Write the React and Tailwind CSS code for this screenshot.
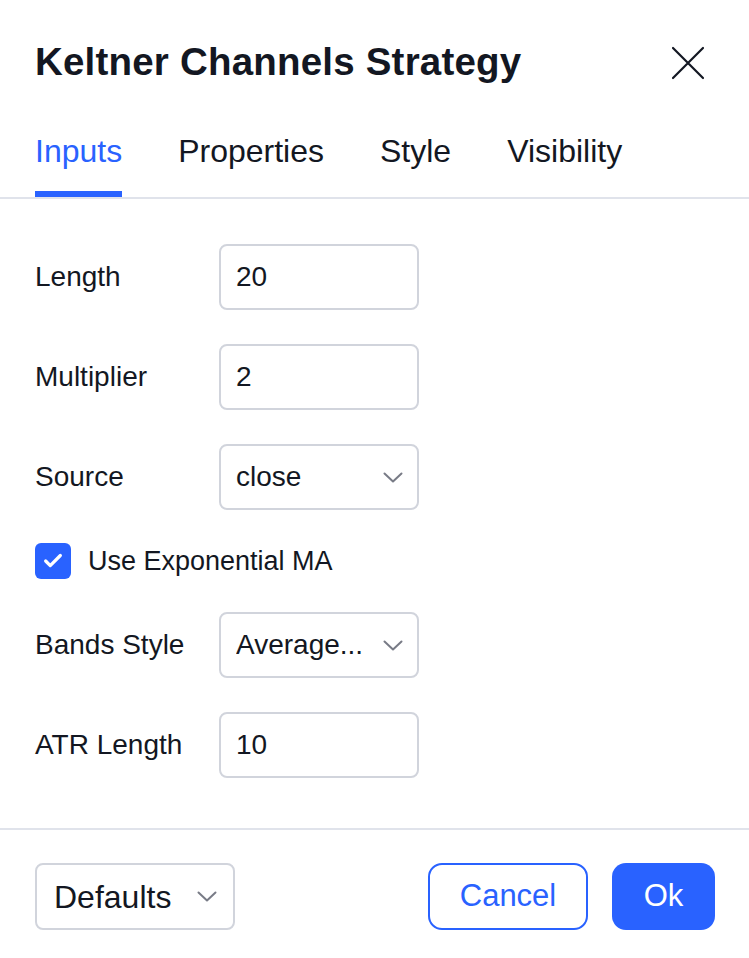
import { Check } from "lucide-react";

const Chevron = () => (
  <svg width="20" height="11" viewBox="0 0 20 11" fill="none" className="shrink-0">
    <path d="M1.5 1.5 L10 9.5 L18.5 1.5" stroke="#787b86" strokeWidth="2" strokeLinecap="round" strokeLinejoin="round" />
  </svg>
);

const Field = ({ label, value, select }) => (
  <div className="flex items-center h-[66px]">
    <div className="w-[184px] text-[28px] text-[#131722]">{label}</div>
    <div className="w-[200px] h-[66px] rounded-[8px] border-2 border-[#d1d4dc] flex items-center pl-[15px] pr-[14px] gap-2">
      <span className="flex-1 text-[28px] text-[#131722] truncate">{value}</span>
      {select && <Chevron />}
    </div>
  </div>
);

export default function App() {
  const tabs = ["Inputs", "Properties", "Style", "Visibility"];

  return (
    <div className="w-[749px] h-[958px] bg-white flex flex-col font-['Liberation_Sans',Arial,sans-serif] text-[#131722]">
      {/* Header */}
      <div className="flex justify-between pl-[35px] pr-[44px] pt-[38px] h-[110px] items-start">
        <h1 className="text-[38.5px] font-bold leading-[48px] tracking-[0.2px]">Keltner Channels Strategy</h1>
        <svg width="34" height="34" viewBox="0 0 34 34" className="mt-[8px]">
          <path d="M2 2 L32 32 M32 2 L2 32" stroke="#131722" strokeWidth="2.2" strokeLinecap="round" />
        </svg>
      </div>

      {/* Tabs */}
      <div className="flex gap-[56px] px-[35px] border-b-2 border-[#e0e3eb]">
        {tabs.map((t, i) => (
          <div key={t} className="flex flex-col h-[87px] justify-between">
            <span className={`pt-[21px] text-[32px] leading-[40px] ${i === 0 ? "text-[#2962ff]" : "text-[#131722]"}`}>
              {t}
            </span>
            <div className={`h-[6px] ${i === 0 ? "bg-[#2962ff]" : "bg-transparent"}`} />
          </div>
        ))}
      </div>

      {/* Inputs */}
      <div className="flex flex-col gap-[34px] px-[35px] pt-[45px] pb-[50px] border-b-2 border-[#e0e3eb]">
        <Field label="Length" value="20" />
        <Field label="Multiplier" value="2" />
        <Field label="Source" value="close" select />
        <div className="flex items-center h-[34px] gap-[17px]">
          <div className="w-[36px] h-[36px] rounded-[6px] bg-[#2962ff] flex items-center justify-center">
            <Check size={22} strokeWidth={3.5} color="white" />
          </div>
          <span className="text-[27px]">Use Exponential MA</span>
        </div>
        <Field label="Bands Style" value="Average..." select />
        <Field label="ATR Length" value="10" />
      </div>

      {/* Footer */}
      <div className="flex items-center justify-between px-[34px] pt-[33px]">
        <div className="w-[200px] h-[67px] rounded-[8px] border-2 border-[#d1d4dc] flex items-center justify-between pl-[17px] pr-[16px] ml-[1px]">
          <span className="text-[32px]">Defaults</span>
          <Chevron />
        </div>
        <div className="flex gap-[24px]">
          <button className="w-[160px] h-[67px] rounded-[14px] border-2 border-[#2962ff] text-[#2962ff] text-[31px]">
            Cancel
          </button>
          <button className="w-[103px] h-[67px] rounded-[14px] bg-[#2962ff] text-white text-[31px]">
            Ok
          </button>
        </div>
      </div>
    </div>
  );
}
